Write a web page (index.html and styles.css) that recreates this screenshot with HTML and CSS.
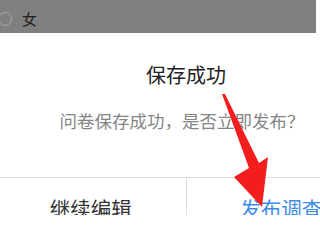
FILE: index.html
```html
<!DOCTYPE html>
<html lang="zh">
<head>
<meta charset="utf-8">
<link rel="stylesheet" href="styles.css">
</head>
<body>
<div class="mask">
  <span class="radio"></span>
  <span class="opt">女</span>
</div>
<div class="dialog">
  <div class="title">保存成功</div>
  <div class="msg">问卷保存成功，是否立即发布？</div>
  <div class="actions">
    <div class="btn">继续编辑</div>
    <div class="btn primary">发布调查</div>
  </div>
</div>
<svg class="arrow" width="320" height="215" viewBox="0 0 320 215">
  <polygon points="222,94 225,94 259,163 268,157 262,207 234,177 249,168" fill="#f41d1d"/>
</svg>
</body>
</html>
```
FILE: styles.css
```css
html, body {
  margin: 0;
  padding: 0;
  background: #fff;
  width: 320px;
  height: 215px;
  overflow: hidden;
  font-family: "Noto Sans CJK SC", "Noto Sans", sans-serif;
}
.mask {
  width: 316px;
  height: 33px;
  background: #808080;
  display: flex;
  align-items: center;
}
.radio {
  border: 1.5px solid #a8a8a8;
  border-radius: 50%;
  margin-left: -2px;
  margin-top: 5px;
  box-sizing: border-box;
  width: 14px;
  height: 14px;
}
.opt {
  font-size: 15px;
  color: #1e1e1e;
  margin-left: 10px;
  margin-top: 5px;
  line-height: 20px;
}
.dialog {
  margin-left: -4px;
  width: 380px;
  background: #fff;
  border-top-left-radius: 6px;
}
.title {
  padding-top: 27px;
  font-size: 20px;
  line-height: 30px;
  color: #222;
  text-align: center;
}
.msg {
  margin-top: 19px;
  font-size: 17.5px;
  line-height: 24px;
  color: #858585;
  text-align: center;
  padding-right: 8px;
}
.actions {
  margin-top: 44px;
  border-top: 1px solid #dedede;
  display: flex;
}
.btn {
  flex: 1;
  height: 60px;
  line-height: 60px;
  font-size: 20.5px;
  color: #333;
  text-align: center;
}
.btn.primary {
  color: #3e8de3;
  border-left: 1px solid #dedede;
}
.arrow {
  position: absolute;
  left: 0;
  top: 0;
}
```
